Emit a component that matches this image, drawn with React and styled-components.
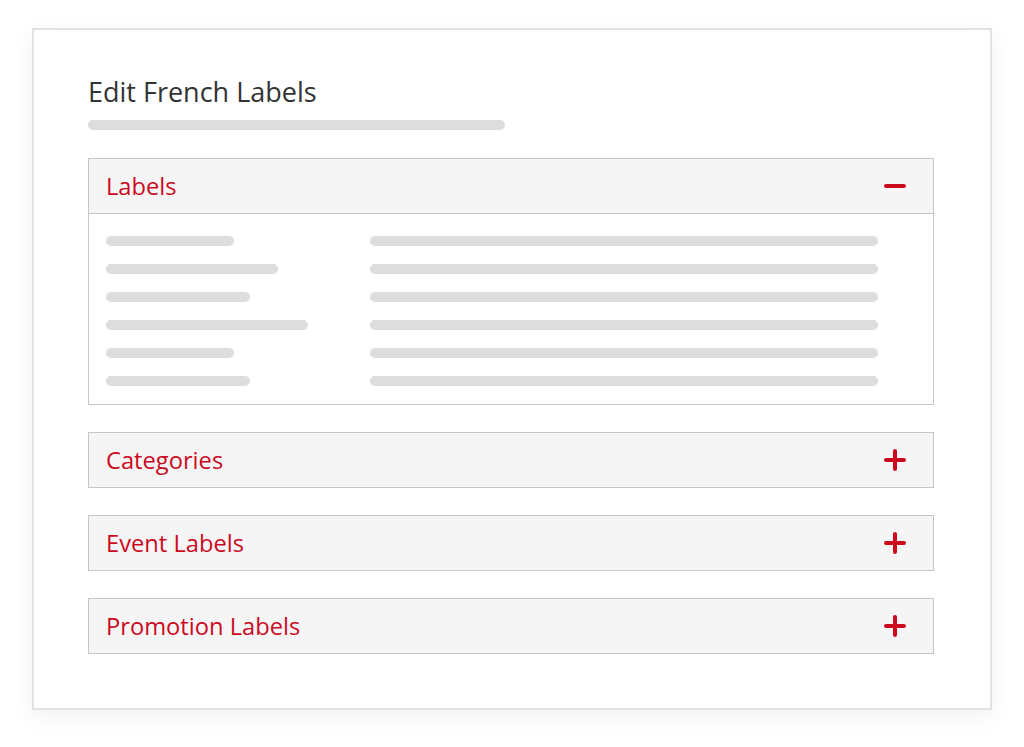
import React from "react";
import styled, { createGlobalStyle } from "styled-components";

const GlobalStyle = createGlobalStyle`
  html, body {
    margin: 0;
    padding: 0;
    background: #ffffff;
    font-family: "Open Sans", "Noto Sans", sans-serif;
  }
`;

const Page = styled.div`
  padding: 28px 32px 38px 32px;
`;

const Card = styled.div`
  width: 960px;
  box-sizing: border-box;
  background: #ffffff;
  border: 2px solid #e2e2e2;
  box-shadow: 0 6px 24px rgba(0, 0, 0, 0.06);
  padding: 46px 56px 54px 54px;
`;

const Title = styled.h2`
  margin: 0;
  font-size: 27px;
  line-height: 32px;
  font-weight: 400;
  color: #333333;
`;

const Bar = styled.div`
  height: 10px;
  border-radius: 5px;
  background: #dddddd;
  width: ${(p) => p.$width || "100%"};
`;

const TitleBar = styled(Bar)`
  margin: 12px 0 28px 0;
`;

const SectionList = styled.div`
  display: flex;
  flex-direction: column;
  gap: 27px;
`;

const Section = styled.section`
  border: 1px solid #c6c6c6;
`;

const Header = styled.div`
  height: 54px;
  display: flex;
  align-items: center;
  justify-content: space-between;
  padding: 0 27px 0 17px;
  background: #f5f5f5;
  border-bottom: ${(p) => (p.$open ? "1px solid #c6c6c6" : "none")};
`;

const HeaderTitle = styled.span`
  font-size: 23.7px;
  color: #cc0a1f;
`;

const Body = styled.div`
  display: grid;
  grid-template-columns: 264px 508px;
  row-gap: 18px;
  padding: 22px 17px 18px 17px;
`;

const Toggle = ({ open }) => (
  <svg width="22" height="22" viewBox="0 0 22 22">
    <rect x="0" y="9" width="22" height="4" rx="2" fill="#cc0a1f" />
    {!open && <rect x="9" y="0" width="4" height="22" rx="2" fill="#cc0a1f" />}
  </svg>
);

const rows = [128, 172, 144, 202, 128, 144];

const sections = [
  { title: "Labels", open: true },
  { title: "Categories" },
  { title: "Event Labels" },
  { title: "Promotion Labels" },
];

export default function App() {
  return (
    <>
      <GlobalStyle />
      <Page>
        <Card>
          <Title>Edit French Labels</Title>
          <TitleBar $width="417px" />
          <SectionList>
            {sections.map((s) => (
              <Section key={s.title}>
                <Header $open={s.open}>
                  <HeaderTitle>{s.title}</HeaderTitle>
                  <Toggle open={s.open} />
                </Header>
                {s.open && (
                  <Body>
                    {rows.map((w, i) => (
                      <React.Fragment key={i}>
                        <Bar $width={`${w}px`} />
                        <Bar />
                      </React.Fragment>
                    ))}
                  </Body>
                )}
              </Section>
            ))}
          </SectionList>
        </Card>
      </Page>
    </>
  );
}
